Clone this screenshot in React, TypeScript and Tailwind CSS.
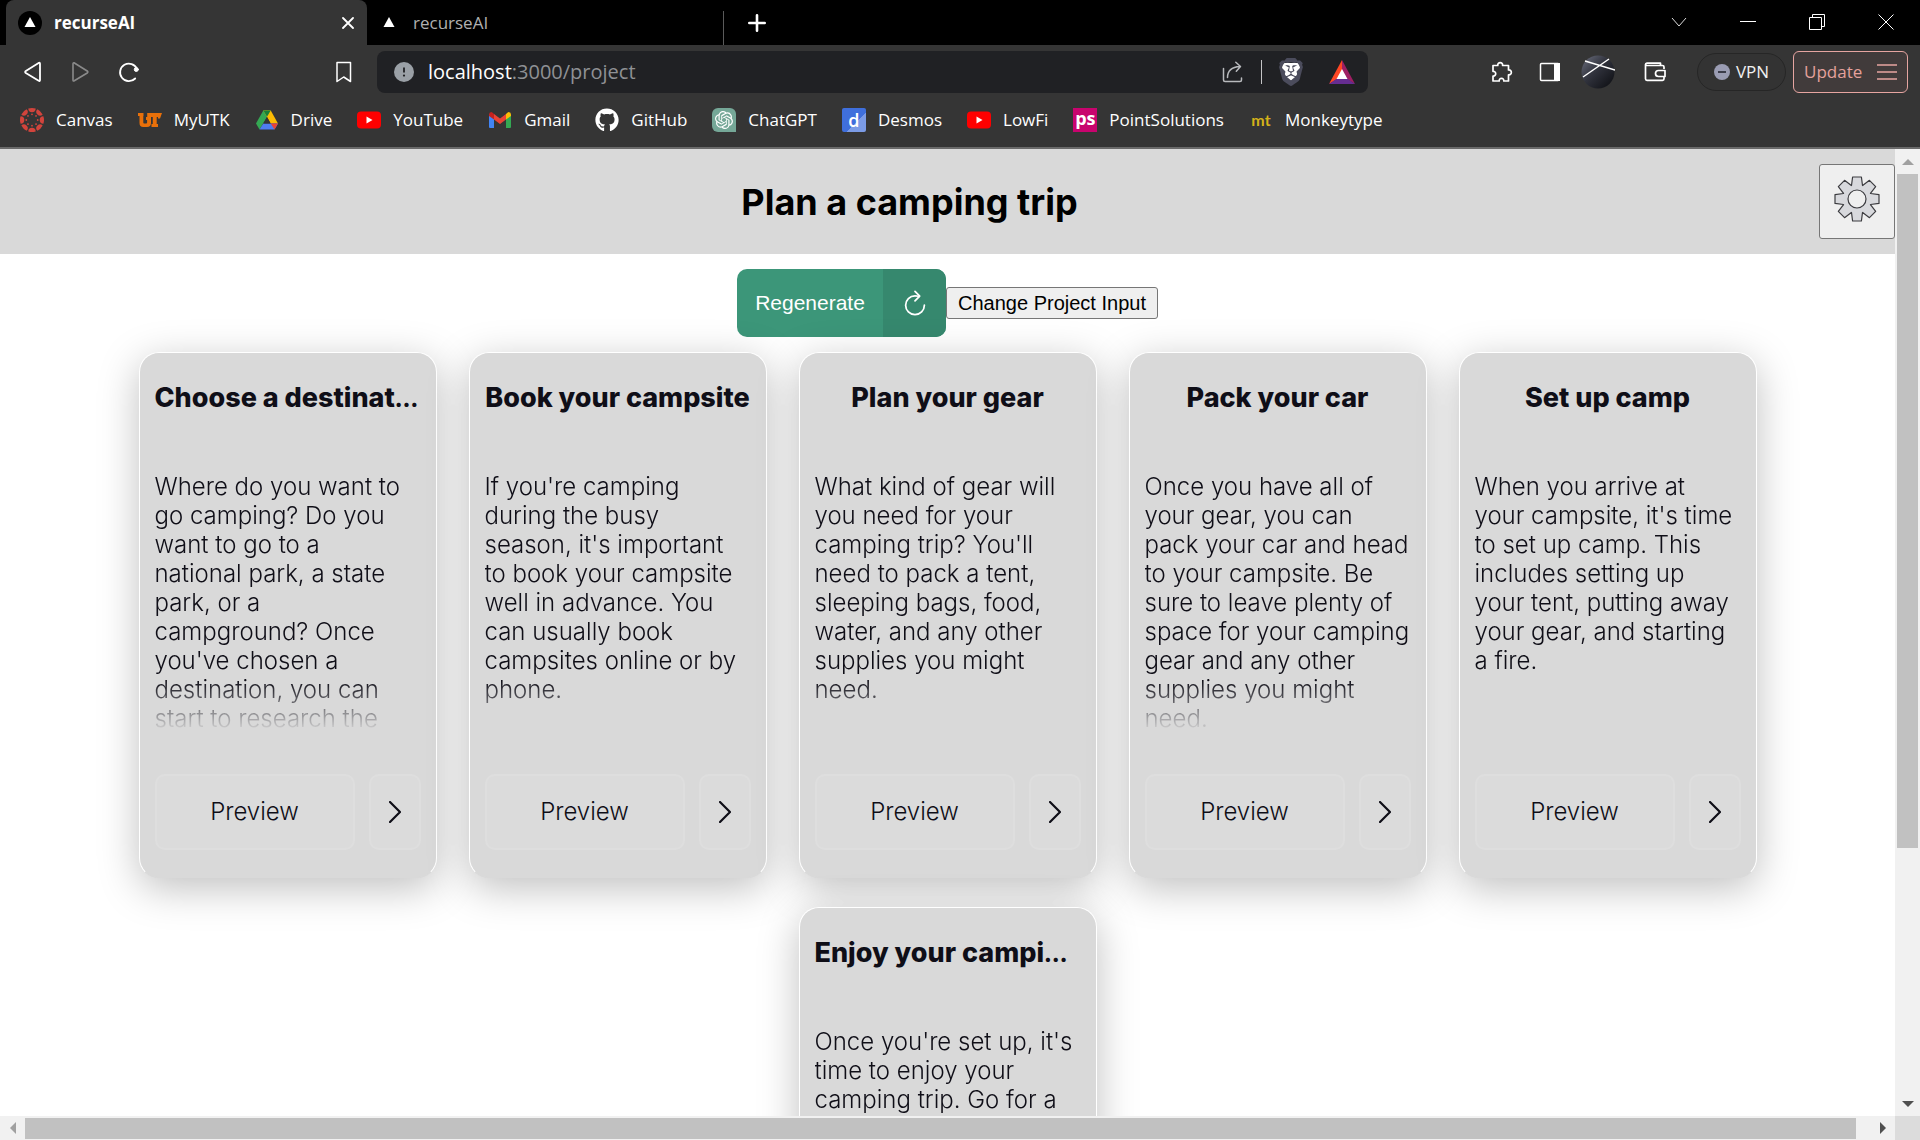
import React from "react";
import { SiBrave, SiOpenai } from "react-icons/si";
import { FaGithub } from "react-icons/fa";

const uiFont = "font-['Open_Sans','Noto_Sans',sans-serif]";

function TriangleMark() {
  return (
    <svg viewBox="0 0 24 24" className="size-6 shrink-0" aria-hidden="true">
      <circle cx="12" cy="12" r="12" fill="#000" />
      <path d="M12 6l5.5 10h-11z" fill="#fff" />
    </svg>
  );
}

function TabStrip() {
  return (
    <div className="flex h-[45px] bg-black pl-[6px] text-white">
      <div className="flex w-[361px] items-center rounded-t-lg bg-[#353535] pr-3 pl-3">
        <TriangleMark />
        <span className="ml-3 flex-1 text-[17px] font-bold">recurseAI</span>
        <button aria-label="Close tab" className="p-px">
          <svg viewBox="0 0 12 12" className="size-3" stroke="#fff" strokeWidth="1.8" strokeLinecap="round">
            <path d="M1 1l10 10M11 1L1 11" />
          </svg>
        </button>
      </div>
      <div className="flex w-[356px] items-center pl-[10px] text-[#b0b0b0]">
        <TriangleMark />
        <span className="ml-3 text-[17px]">recurseAI</span>
      </div>
      <div className="mt-[11px] w-px bg-[#5a5a5a]" />
      <button aria-label="New tab" className="ml-6">
        <svg viewBox="0 0 18 18" className="size-[18px]" stroke="#fff" strokeWidth="2.6" strokeLinecap="round">
          <path d="M9 1.3v15.4M1.3 9h15.4" />
        </svg>
      </button>
      <div className="ml-auto flex items-center pr-[26px] pb-px">
        <button aria-label="Search tabs" className="w-[69px]">
          <svg viewBox="0 0 16 16" className="size-4" fill="none" stroke="#ddd">
            <path d="M1 4l7 8 7-8" />
          </svg>
        </button>
        <button aria-label="Minimize" className="w-[69px]">
          <svg viewBox="0 0 16 16" className="size-4" stroke="#fff">
            <path d="M0 7.5h16" />
          </svg>
        </button>
        <button aria-label="Restore" className="w-[69px]">
          <svg viewBox="0 0 16 16" className="size-4" fill="none" stroke="#fff">
            <path d="M.5 3.500h12v12H.5zM3.500 3.500v-3h12v12h-3" />
          </svg>
        </button>
        <button aria-label="Close window">
          <svg viewBox="0 0 16 16" className="size-4" stroke="#fff">
            <path d="M.5.5l15 15M15.500.5l-15 15" />
          </svg>
        </button>
      </div>
    </div>
  );
}

function AddressBar() {
  return (
    <div className="flex h-[42px] w-[991px] items-center rounded-lg bg-[#202124] pr-3 pl-[17px]">
      <svg viewBox="0 0 20 20" className="size-5 shrink-0">
        <circle cx="10" cy="10" r="10" fill="#9aa0a6" />
        <path d="M10 5.500v5" stroke="#202124" strokeWidth="1.8" />
        <circle cx="10" cy="13.600" r="1.100" fill="#202124" />
      </svg>
      <p className="ml-[14px] flex-1 text-[20px] leading-none text-[#8f9195]">
        <span className="text-white">localhost</span>:3000/project
      </p>
      <button aria-label="Share">
        <svg viewBox="0 0 22 22" className="size-[22px]" fill="none" stroke="#b8babd" strokeWidth="1.500" strokeLinecap="round" strokeLinejoin="round">
          <path d="M1.500 7.500V19q0 1.500 1.500 1.500h15q1.500 0 1.500-1.500v-2" />
          <path d="M5.500 16.500C5.500 10 9.500 6 18 5.500M13.800 1.200l4.700 4.300-4.200 4.700" />
        </svg>
      </button>
      <div className="ml-[17px] h-6 w-px bg-[#c4c4c6]" />
      <button aria-label="Brave Shields" className="relative ml-[15px] size-7">
        <svg viewBox="0 0 28 28" className="absolute inset-0 size-7">
          <path d="M6 5h16l1 5-3 11-6 4-6-4L5 10z" fill="#fff" />
        </svg>
        <SiBrave className="absolute inset-0 size-7 text-[#4b4c5c]" />
      </button>
      <button aria-label="Brave Rewards" className="ml-[23px]">
        <svg viewBox="0 0 28 24" className="h-6 w-7">
          <path d="M14 0L1 24l13-8z" fill="#ff4724" />
          <path d="M14 0l13 24-13-8z" fill="#9e1f63" />
          <path d="M1 24h26l-13-9z" fill="#662d91" />
          <path d="M14 9l-5.500 10h11z" fill="#fff" />
        </svg>
      </button>
    </div>
  );
}

function Toolbar() {
  return (
    <div className="flex h-[54px] items-center pr-3 pl-6">
      <button aria-label="Back">
        <svg viewBox="0 0 18 22" className="h-[22px] w-[18px]" fill="none" stroke="#fff" strokeWidth="1.800" strokeLinejoin="round">
          <path d="M15 1.800Q16 1.500 16 3v16q0 1.500-1.300.800L1.800 12q-1.300-1 0-2z" />
        </svg>
      </button>
      <button aria-label="Forward" className="ml-[29px]" disabled>
        <svg viewBox="0 0 18 22" className="h-[22px] w-[18px]" fill="none" stroke="#8a8a8a" strokeWidth="1.600" strokeLinejoin="round">
          <path d="M3 1.800Q2 1.500 2 3v16q0 1.500 1.300.800L16.200 12q1.300-1 0-2z" />
        </svg>
      </button>
      <button aria-label="Reload" className="ml-[29px]">
        <svg viewBox="0 0 22 22" className="size-[22px]" fill="none" stroke="#fff" strokeWidth="1.800" strokeLinecap="round">
          <path d="M19 8A8.800 8.800 0 1 0 17.200 17.500" />
          <circle cx="18.300" cy="8.500" r="2" fill="#fff" stroke="#fff" strokeWidth="1" />
        </svg>
      </button>
      <button aria-label="Bookmark this page" className="ml-[195px]">
        <svg viewBox="0 0 18 22" className="h-[22px] w-[18px]" fill="none" stroke="#fff" strokeWidth="1.500" strokeLinejoin="round">
          <path d="M2 1.500h13.500v19L8.700 16 2 20.500z" />
        </svg>
      </button>
      <div className="ml-6">
        <AddressBar />
      </div>
      <div className="ml-auto flex items-center">
        <button aria-label="Extensions">
          <svg viewBox="0 0 22 22" className="size-[22px]" fill="none" stroke="#fff" strokeWidth="1.700" strokeLinejoin="round">
            <path d="M2 4.500h4.800c-.6-3.800 5.400-3.800 4.800 0H17.500V9c3.800-.6 3.800 5.400 0 4.800V20h-4.700c.4-3.600-5-3.600-4.600 0H2v-5c3.600.4 3.600-5 0-4.600z" />
          </svg>
        </button>
        <button aria-label="Side panel" className="ml-[26px]">
          <svg viewBox="0 0 22 20" className="h-5 w-[22px]">
            <rect x="1.500" y="1.500" width="18.500" height="17" rx="1" fill="none" stroke="#fff" strokeWidth="1.500" />
            <path d="M15 1h6v18h-6z" fill="#fff" />
          </svg>
        </button>
        <button aria-label="Profile" className="ml-5">
          <svg viewBox="0 0 34 34" className="size-[34px]">
            <defs>
              <linearGradient id="avatar" x1="0" y1="0" x2="1" y2="1">
                <stop offset="0" stopColor="#6d7080" />
                <stop offset=".45" stopColor="#30323c" />
                <stop offset="1" stopColor="#0a0b0f" />
              </linearGradient>
            </defs>
            <circle cx="17" cy="17" r="16.500" fill="url(#avatar)" />
            <path d="M4 6l30 9M28 4L2 22" stroke="#fff" strokeWidth="1.500" />
          </svg>
        </button>
        <button aria-label="Wallet" className="ml-[29px]">
          <svg viewBox="0 0 22 20" className="h-5 w-[22px]" fill="none" stroke="#fff" strokeWidth="1.700" strokeLinejoin="round">
            <path d="M20 7V5q0-1.500-1.500-1.500H3Q1.500 3.500 1.500 2.500T3 1.200h13.500V3M1.500 2.500v14.300q0 1.500 1.500 1.500h15.500q1.500 0 1.500-1.500V15M21 8.500h-6.500a3 3 0 0 0 0 6H21z" />
          </svg>
        </button>
        <button className="ml-[31px] flex h-[38px] w-[89px] items-center justify-center gap-[6px] rounded-full border border-[#262626] bg-[#333333] text-[17px] text-[#f0f0f0]">
          <svg viewBox="0 0 16 16" className="size-4">
            <circle cx="8" cy="8" r="8" fill="#9a9cb3" />
            <path d="M4 8h8" stroke="#2a2b38" strokeWidth="1.700" />
          </svg>
          VPN
        </button>
        <button className="ml-[7px] flex h-[42px] w-[115px] items-center justify-between rounded-md border border-[#e6a5a1] bg-[#413b3b] px-[10px] text-[17px] text-[#e5a19c]">
          Update
          <svg viewBox="0 0 20 16" className="h-4 w-5" stroke="#e6a5a1" strokeWidth="1.500">
            <path d="M0 1h20M0 8h20M0 15h20" />
          </svg>
        </button>
      </div>
    </div>
  );
}

function CanvasLogo() {
  const angles = [0, 45, 90, 135, 180, 225, 270, 315];
  return (
    <svg viewBox="0 0 24 24" className="size-6">
      {angles.map((a) => (
        <g key={a} transform={"rotate(" + a + " 12 12)"}>
          <path d="M8.300.6Q12-.6 15.700.6A3.700 3.700 0 0 1 8.300.6z" fill="#d2443c" />
          <circle cx="12" cy="6.300" r=".9" fill="#d2443c" />
        </g>
      ))}
    </svg>
  );
}

function UtLogo() {
  return (
    <svg viewBox="0 0 24 24" className="size-6">
      <path
        fill="#e8700a"
        d="M0 5h5.500v3H5.300v6.500q0 1 .9 1h2q.9 0 .9-1V12H8V9h1.200V5H24l-2 5.500h-2V9h-1.300v7H20v3h-6.500v-3h1.300V9H13v6q0 4-4 4H5.300q-3.800 0-3.800-4V8H0z"
      />
    </svg>
  );
}

function DriveLogo() {
  return (
    <svg viewBox="0 0 24 24" className="size-6">
      <path d="M8.300 2.500h7.400L12 9 4.500 21.500 1 15.500z" fill="#34a853" />
      <path d="M8.300 2.500h7.400L23 15.500h-7.300z" fill="#fbbc04" />
      <path d="M8.300 2.500h7.400L12 8.800z" fill="#188038" />
      <path d="M8.300 15.500H23l-3.500 6h-15z" fill="#4f7df0" />
      <path d="M15.700 15.500H23l-3.500 6z" fill="#ea4335" />
      <path d="M12 9l3.700 6.500H8.300z" fill="#353535" />
    </svg>
  );
}

function YoutubeLogo() {
  return (
    <svg viewBox="0 0 24 24" className="size-6">
      <rect x="0" y="3.500" width="24" height="17" rx="4" fill="#f00" />
      <path d="M9.500 8.500v7l6-3.500z" fill="#fff" />
    </svg>
  );
}

function GmailLogo() {
  return (
    <svg viewBox="0 0 24 24" className="size-6">
      <path d="M1 6v13q0 1 1 1h4v-10z" fill="#4285f4" />
      <path d="M23 6v13q0 1-1 1h-4v-10z" fill="#34a853" />
      <path d="M6 6l6 4.500L18 6v5.500L12 16l-6-4.500z" fill="#ea4335" />
      <path d="M1 6.500Q1 4 3.300 4 4 4 6 6v5.500L1 8z" fill="#c5221f" />
      <path d="M23 6.500Q23 4 20.700 4 20 4 18 6v5.500L23 8z" fill="#fbbc04" />
    </svg>
  );
}

const bookmarks: { label: string; icon: React.ReactNode }[] = [
  { label: "Canvas", icon: <CanvasLogo /> },
  { label: "MyUTK", icon: <UtLogo /> },
  { label: "Drive", icon: <DriveLogo /> },
  { label: "YouTube", icon: <YoutubeLogo /> },
  { label: "Gmail", icon: <GmailLogo /> },
  { label: "GitHub", icon: <FaGithub className="size-6" /> },
  {
    label: "ChatGPT",
    icon: (
      <span className="flex size-6 items-center justify-center rounded-t-md rounded-bl-md bg-[#75a797]">
        <SiOpenai className="size-[18px]" />
      </span>
    ),
  },
  {
    label: "Desmos",
    icon: (
      <span className="flex size-6 items-center justify-center rounded-xs bg-linear-135 from-[#3f6fdc] from-60% to-[#7b9be6] to-60% text-[18px] leading-none font-semibold">
        d
      </span>
    ),
  },
  { label: "LowFi", icon: <YoutubeLogo /> },
  {
    label: "PointSolutions",
    icon: (
      <span className="flex size-6 items-center justify-center bg-[#c8046e] pb-1 text-[18px] leading-none font-bold">ps</span>
    ),
  },
  {
    label: "Monkeytype",
    icon: (
      <span className="flex size-6 items-center justify-center font-['Lato',sans-serif] text-[16px] leading-none font-bold text-[#d3b21a]">
        mt
      </span>
    ),
  },
];

function BookmarksBar() {
  return (
    <nav className="flex h-12 items-center gap-[25px] pb-[6px] pl-5 text-[17px] text-white">
      {bookmarks.map((b) => (
        <a key={b.label} href="#" className="flex items-center gap-3 whitespace-nowrap">
          {b.icon}
          {b.label}
        </a>
      ))}
    </nav>
  );
}

function gearPath() {
  const teeth = 8;
  const points: string[] = [];
  for (let i = 0; i < teeth; i++) {
    const a = (i * 2 * Math.PI) / teeth;
    const corners = [
      [-5.5, -13.5],
      [-4.4, -22],
      [4.4, -22],
      [5.5, -13.5],
    ];
    for (const [x, y] of corners) {
      const px = x * Math.cos(a) - y * Math.sin(a);
      const py = x * Math.sin(a) + y * Math.cos(a);
      points.push(px.toFixed(2) + " " + py.toFixed(2));
    }
  }
  return "M" + points.join("L") + "Z";
}

function PageHeader() {
  return (
    <header className="flex h-[105px] shrink-0 items-center bg-[#d9d9d9]">
      <h1 className="flex-1 text-center text-[36px] font-bold text-black">Plan a camping trip</h1>
      <button
        aria-label="Settings"
        className="flex h-[75px] w-[76px] items-start justify-center rounded-[3px] border border-[#767676] bg-[#efefef] pt-[11px]"
      >
        <svg viewBox="-23 -23 46 46" className="size-[46px]" stroke="#3c3c40" strokeWidth="1.200" strokeLinejoin="round">
          <path d={gearPath()} fill="#d8d9dd" />
          <circle r="9" fill="#efefef" />
        </svg>
      </button>
    </header>
  );
}

function Actions() {
  return (
    <div className="mt-[15px] flex items-center justify-center font-['Liberation_Sans',Arial,sans-serif] text-[20px]">
      <button className="flex h-[68px] items-stretch overflow-hidden rounded-[10px] bg-[#3c9679] text-[21px] text-white">
        <span className="flex w-[146px] items-center justify-center">Regenerate</span>
        <span className="flex w-[63px] items-center justify-center bg-[#36886e]">
          <svg viewBox="0 0 512 512" className="size-[30px]" fill="none" stroke="#fff" strokeWidth="30" strokeLinecap="round" strokeLinejoin="round">
            <path d="M320 146s24.360-12-64-12a160 160 0 1 0 160 160" strokeMiterlimit="10" />
            <path d="M256 58l80 80-80 80" />
          </svg>
        </span>
      </button>
      <button className="h-8 w-[212px] rounded-[3px] border border-[#767676] bg-[#efefef] text-black">Change Project Input</button>
    </div>
  );
}

type Step = { title: string; shortened?: boolean; body: string; inset?: boolean };

const steps: Step[] = [
  {
    title: "Choose a destinat",
    shortened: true,
    inset: true,
    body: "Where do you want to go camping? Do you want to go to a national park, a state park, or a campground? Once you've chosen a destination, you can start to research the",
  },
  {
    title: "Book your campsite",
    body: "If you're camping during the busy season, it's important to book your campsite well in advance. You can usually book campsites online or by phone.",
  },
  {
    title: "Plan your gear",
    body: "What kind of gear will you need for your camping trip? You'll need to pack a tent, sleeping bags, food, water, and any other supplies you might need.",
  },
  {
    title: "Pack your car",
    body: "Once you have all of your gear, you can pack your car and head to your campsite. Be sure to leave plenty of space for your camping gear and any other supplies you might need.",
  },
  {
    title: "Set up camp",
    body: "When you arrive at your campsite, it's time to set up camp. This includes setting up your tent, putting away your gear, and starting a fire.",
  },
  {
    title: "Enjoy your campi",
    shortened: true,
    body: "Once you're set up, it's time to enjoy your camping trip. Go for a",
  },
];

function StepCard({ title, shortened, body, inset }: Step) {
  return (
    <article className="flex w-[298px] flex-col rounded-[20px] border border-white border-b-[#d9d9d9] bg-[#d9d9d9] px-[15px] pt-[25px] pb-[27px] text-[#0f0e17] shadow-[0_10px_40px_rgba(0,0,0,0.25)]">
      <h2 className={"h-10 text-[27px] leading-10 font-extrabold whitespace-nowrap " + (shortened ? "text-left" : "text-center")}>
        {title}
        {shortened && <span className="text-[21px] leading-none font-black">…</span>}
      </h2>
      <p
        className={
          "mt-[54px] h-[260px] overflow-hidden mask-b-from-80% mask-b-to-100% text-[24px] leading-[29px] font-light " +
          (inset ? "pr-2" : "")
        }
      >
        {body}
      </p>
      <div className="mt-[42px] flex gap-[14px] text-[24px] font-light">
        <button className="h-[76px] flex-1 rounded-[10px] border-2 border-[#dedede] bg-[#dbdbdb]">Preview</button>
        <button
          aria-label={"Open " + title}
          className="flex w-[52px] items-center justify-center rounded-[10px] border-2 border-[#dedede] bg-[#dbdbdb]"
        >
          <svg viewBox="0 0 12 22" className="h-[22px] w-3" fill="none" stroke="#0f0e17" strokeWidth="2.200" strokeLinecap="round" strokeLinejoin="round">
            <path d="M1 1l10 10L1 21" />
          </svg>
        </button>
      </div>
    </article>
  );
}

function Arrow({ turn, color }: { turn: string; color: string }) {
  return (
    <svg viewBox="0 0 12 12" className={"size-3 " + turn + " " + color} fill="currentColor" aria-hidden="true">
      <path d="M6 3l6 6H0z" />
    </svg>
  );
}

function VerticalScrollbar() {
  return (
    <div className="flex w-[25px] shrink-0 flex-col items-center bg-[#f1f1f1]">
      <div className="flex h-[25px] items-center">
        <Arrow turn="rotate-0" color="text-[#a0a0a0]" />
      </div>
      <div className="h-[674px] w-[21px] bg-[#c1c1c1]" />
      <div className="mt-auto flex h-[25px] items-center">
        <Arrow turn="rotate-180" color="text-[#4f4f4f]" />
      </div>
    </div>
  );
}

function HorizontalScrollbar() {
  return (
    <div className="flex h-6 shrink-0 bg-[#f1f1f1]">
      <div className="flex w-[25px] items-center justify-center">
        <Arrow turn="-rotate-90" color="text-[#a0a0a0]" />
      </div>
      <div className="flex flex-1 items-center pr-[14px]">
        <div className="h-[21px] w-full bg-[#c1c1c1]" />
      </div>
      <div className="flex w-[25px] items-center justify-center">
        <Arrow turn="rotate-90" color="text-[#4f4f4f]" />
      </div>
      <div className="w-[25px] bg-[#dcdcdc]" />
    </div>
  );
}

export default function App() {
  return (
    <div className="flex h-screen flex-col overflow-hidden bg-white">
      <div className={"shrink-0 border-b-2 border-[#6a6a6a] bg-[#353535] " + uiFont}>
        <TabStrip />
        <Toolbar />
        <BookmarksBar />
      </div>
      <div className="flex min-h-0 flex-1">
        <main className="flex min-w-0 flex-1 flex-col overflow-hidden font-['Inter',sans-serif]">
          <PageHeader />
          <Actions />
          <section className="mt-[15px] flex flex-wrap justify-center gap-x-8 gap-y-[29px] px-16">
            {steps.map((s) => (
              <StepCard key={s.title} {...s} />
            ))}
          </section>
        </main>
        <VerticalScrollbar />
      </div>
      <HorizontalScrollbar />
    </div>
  );
}
